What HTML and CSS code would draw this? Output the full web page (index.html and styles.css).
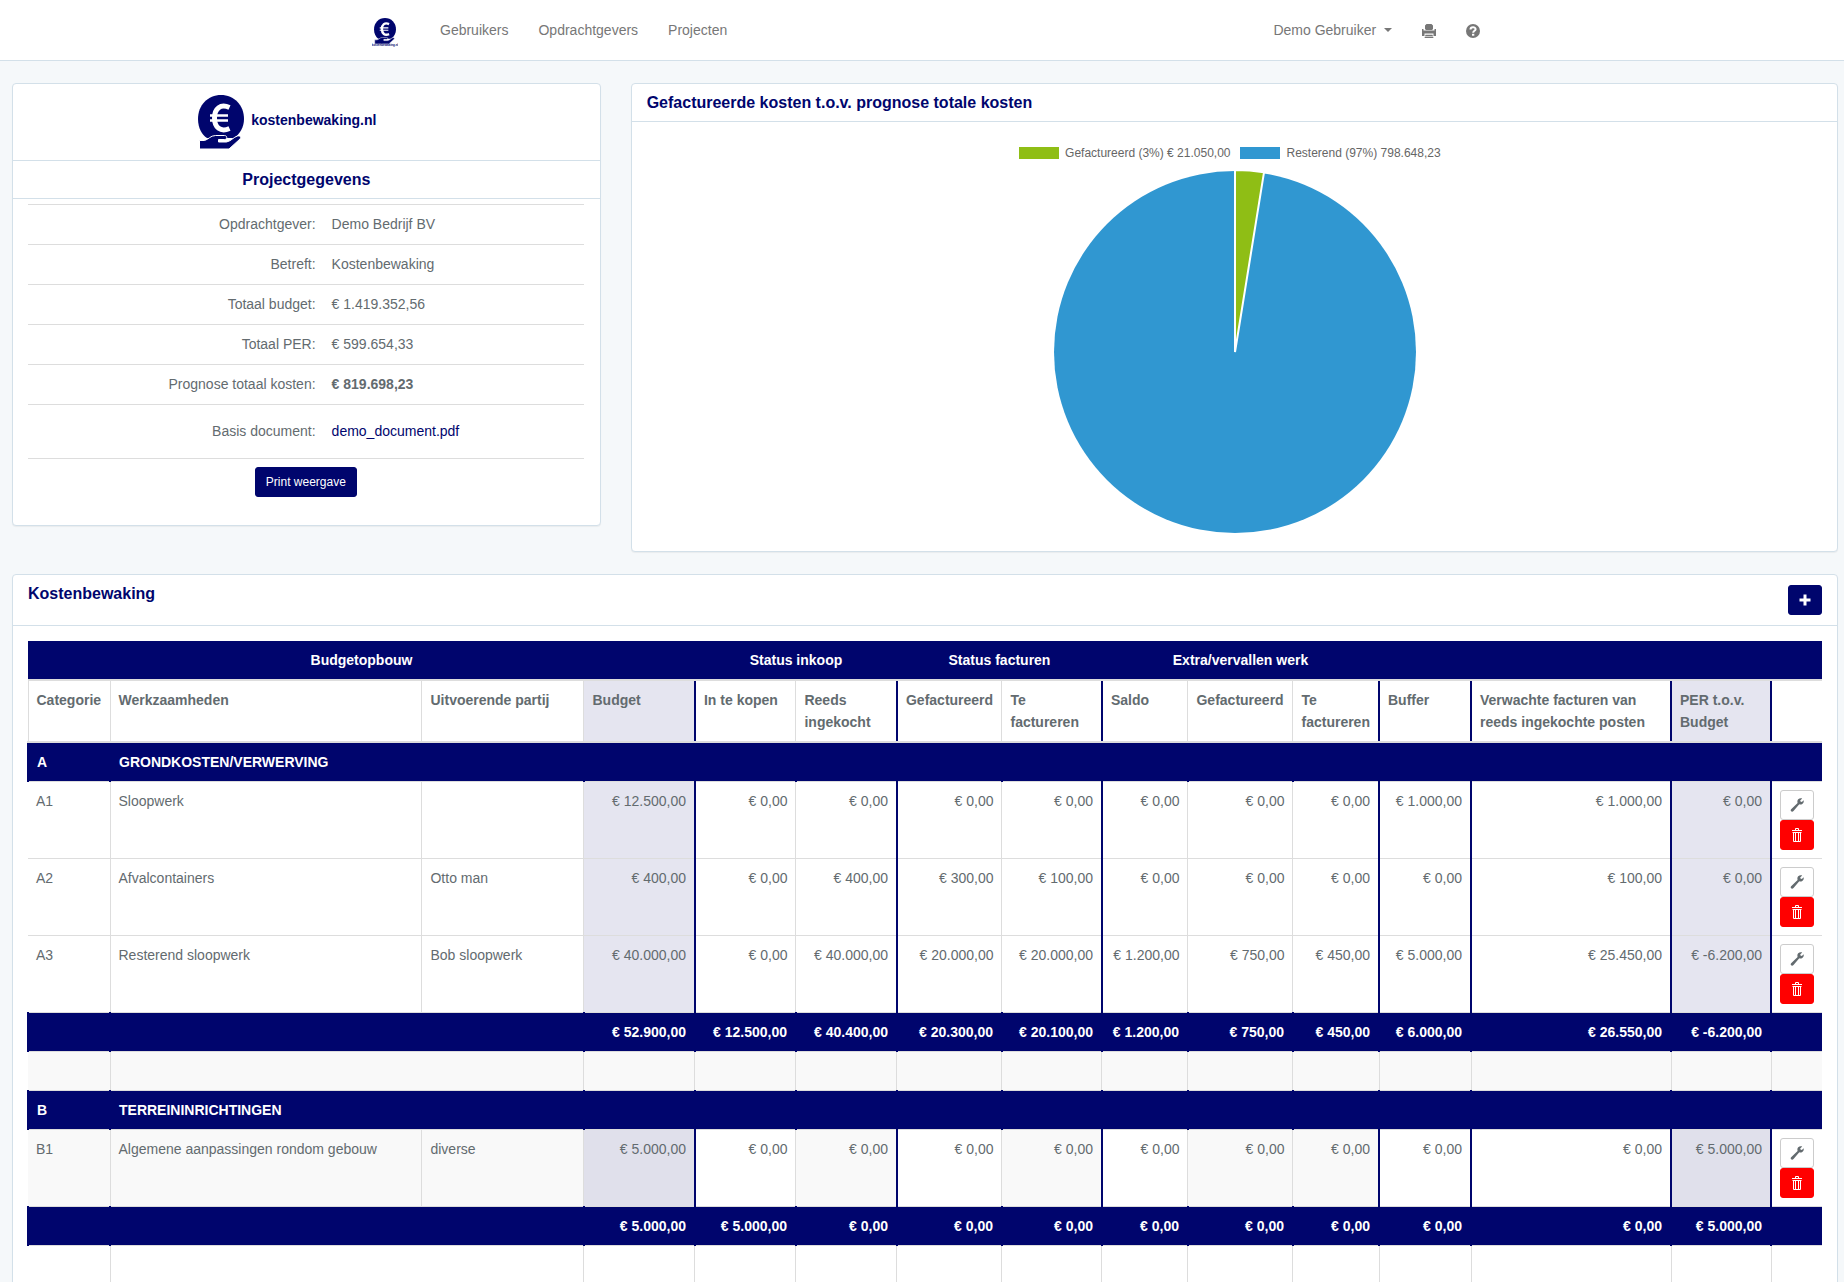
FILE: index.html
```html
<!DOCTYPE html>
<html lang="nl">
<head>
<meta charset="utf-8">
<title>Kostenbewaking</title>
<link rel="stylesheet" href="styles.css">
</head>
<body>
<svg class="sprite" aria-hidden="true">
  <symbol id="mark" viewBox="0 0 46 54">
    <path fill="#00056d" d="M23 0C10 0 0 10 0 24c0 9 4 16 9 19h27c6-4 10-11 10-19C46 10 36 0 23 0z"/>
    <path fill="none" stroke="#fff" stroke-width="5" d="M31.500 12.500c-9-4-15 1-15 10.500s6 14.500 15 10.500"/>
    <path stroke="#fff" stroke-width="2.400" d="M12 20.500H30M12 25.500H30"/>
    <path fill="#00056d" stroke="#fff" stroke-width="1" d="M1.500 45.500h5c4-1 6-5 11-5h9c3 0 3 4 0 4h-6v2.500h8c5-1 7-5 11-6 3-.500 4 1 2.500 3L31 54H1.500z"/>
  </symbol>
  <symbol id="wrench" viewBox="0 0 14 14">
    <path fill="#636b6f" d="M8.200 1.300c1.300-1.200 2.800-1.300 4-.7L10.200 2.400l.3 1.200 1.300.3 1.900-1.700c.3 1.700-.4 3.300-1.800 4-.9.400-1.800.4-2.600.1L3.500 13c-.7.900-1.800.9-2.400.3-.6-.6-.5-1.600.3-2.300L7.600 5.100c-.4-1.200-.3-2.800.6-3.800z"/>
  </symbol>
  <symbol id="trash" viewBox="0 0 14 14">
    <path fill="none" stroke="#fff" d="M5.500 2V.500h3V2M2 2.500h10M2.500 4.500h9M3.500 4.500v9h7v-9M5.500 5v8M8.500 5v8"/>
  </symbol>
</svg>

<header class="navbar">
  <div class="navbar-inner">
    <nav class="links" aria-label="Hoofdmenu">
      <a class="brand" href="#" aria-label="kostenbewaking.nl">
        <svg width="26" height="30" viewBox="0 0 26 30"><use href="#mark" x="2" y="0" width="22" height="26"/><text x="13" y="28" class="brand-text">kostenbewaking.nl</text></svg>
      </a>
      <a href="#">Gebruikers</a>
      <a href="#">Opdrachtgevers</a>
      <a href="#">Projecten</a>
    </nav>
    <nav class="links" aria-label="Account">
      <a href="#" class="user">Demo Gebruiker <span class="caret"></span></a>
      <a href="#" class="icon" aria-label="Afdrukken"><svg width="14" height="14" viewBox="0 0 14 14"><path fill="#777" d="M4.500 0h5l1.500 1.500V5l-1 1H4L3 5V1.500zM0 5h1.500v1.500h11V5H14v7h-2.500V9.500h-9V12H0zM3.500 10.700h7L11.500 14h-9z"/><path stroke="#fff" d="M3 12.500h8" stroke-width=".6"/></svg></a>
      <a href="#" class="icon" aria-label="Help"><svg width="14" height="14" viewBox="0 0 14 14"><circle cx="7" cy="7" r="7" fill="#777"/><path fill="none" stroke="#fff" stroke-width="2" d="M4.500 5.500C4.500 2.600 9.600 2.600 9.600 5.200 9.600 6.900 7.200 6.700 7.200 8.800"/><path fill="#fff" d="M6 9.800h2.300v1.900H6z"/></svg></a>
    </nav>
  </div>
</header>

<main class="page">
  <div class="top">
    <section class="panel">
      <div class="logo"><svg width="46" height="54"><use href="#mark"/></svg><span>kostenbewaking.nl</span></div>
      <div class="panel-heading centered"><h2>Projectgegevens</h2></div>
      <div class="details-body">
        <table class="details">
          <tr><th scope="row">Opdrachtgever:</th><td>Demo Bedrijf BV</td></tr>
          <tr><th scope="row">Betreft:</th><td>Kostenbewaking</td></tr>
          <tr><th scope="row">Totaal budget:</th><td>€ 1.419.352,56</td></tr>
          <tr><th scope="row">Totaal PER:</th><td>€ 599.654,33</td></tr>
          <tr><th scope="row">Prognose totaal kosten:</th><td><strong>€ 819.698,23</strong></td></tr>
          <tr class="document"><th scope="row">Basis document:</th><td><a href="#">demo_document.pdf</a></td></tr>
        </table>
        <div class="actions"><button type="button" class="btn primary">Print weergave</button></div>
      </div>
    </section>

    <section class="panel wide">
      <div class="panel-heading"><h2>Gefactureerde kosten t.o.v. prognose totale kosten</h2></div>
      <div class="chart">
        <ul class="legend">
          <li><span class="swatch green"></span>Gefactureerd (3%) € 21.050,00</li>
          <li><span class="swatch blue"></span>Resterend (97%) 798.648,23</li>
        </ul>
        <svg class="pie" width="362" height="362" viewBox="-181 -181 362 362" role="img" aria-label="Gefactureerd 3%, resterend 97%">
          <circle r="181" fill="#3097d1"/>
          <path fill="#8fbe15" stroke="#fff" stroke-width="2" d="M0 0V-182A182 182 0 0 1 29 -179.700Z"/>
        </svg>
      </div>
    </section>
  </div>

  <section class="panel">
    <div class="panel-heading with-button"><h2>Kostenbewaking</h2>
      <button type="button" class="btn primary square" aria-label="Toevoegen"><svg width="12" height="12" viewBox="0 0 12 12"><path stroke="#fff" stroke-width="3" d="M6 .500v11M.500 6h11"/></svg></button>
    </div>
    <div class="costs-body">
      <table class="costs">
        <colgroup><col class="w82"><col><col class="w162"><col class="w111"><col class="w101"><col class="w101"><col class="w105"><col class="w100"><col class="w86"><col class="w105"><col class="w86"><col class="w92"><col class="w200"><col class="w100"><col class="w51"></colgroup>
        <thead>
          <tr class="groups"><th colspan="4">Budgetopbouw</th><th colspan="2">Status inkoop</th><th colspan="2">Status facturen</th><th colspan="3">Extra/vervallen werk</th><th></th><th></th><th></th><th></th></tr>
          <tr class="heads"><th>Categorie</th><th>Werkzaamheden</th><th>Uitvoerende partij</th><th class="tint">Budget</th><th class="edge">In te kopen</th><th>Reeds ingekocht</th><th class="edge">Gefactureerd</th><th>Te factureren</th><th class="edge">Saldo</th><th>Gefactureerd</th><th>Te factureren</th><th class="edge">Buffer</th><th class="edge">Verwachte facturen van reeds ingekochte posten</th><th class="edge tint">PER t.o.v. Budget</th><th class="edge"></th></tr>
        </thead>
        <tbody>
          <tr class="band"><td>A</td><td colspan="2">GRONDKOSTEN/VERWERVING</td><td></td><td></td><td></td><td></td><td></td><td></td><td></td><td></td><td></td><td></td><td></td><td></td></tr>
          <tr class="item"><td>A1</td><td>Sloopwerk</td><td></td><td class="tint">€ 12.500,00</td><td class="edge">€ 0,00</td><td>€ 0,00</td><td class="edge">€ 0,00</td><td>€ 0,00</td><td class="edge">€ 0,00</td><td>€ 0,00</td><td>€ 0,00</td><td class="edge">€ 1.000,00</td><td class="edge">€ 1.000,00</td><td class="edge tint">€ 0,00</td><td class="edge"><button type="button" class="btn square" aria-label="Bewerken"><svg width="14" height="14"><use href="#wrench"/></svg></button><button type="button" class="btn danger square" aria-label="Verwijderen"><svg width="14" height="14"><use href="#trash"/></svg></button></td></tr>
          <tr class="item"><td>A2</td><td>Afvalcontainers</td><td>Otto man</td><td class="tint">€ 400,00</td><td class="edge">€ 0,00</td><td>€ 400,00</td><td class="edge">€ 300,00</td><td>€ 100,00</td><td class="edge">€ 0,00</td><td>€ 0,00</td><td>€ 0,00</td><td class="edge">€ 0,00</td><td class="edge">€ 100,00</td><td class="edge tint">€ 0,00</td><td class="edge"><button type="button" class="btn square" aria-label="Bewerken"><svg width="14" height="14"><use href="#wrench"/></svg></button><button type="button" class="btn danger square" aria-label="Verwijderen"><svg width="14" height="14"><use href="#trash"/></svg></button></td></tr>
          <tr class="item"><td>A3</td><td>Resterend sloopwerk</td><td>Bob sloopwerk</td><td class="tint">€ 40.000,00</td><td class="edge">€ 0,00</td><td>€ 40.000,00</td><td class="edge">€ 20.000,00</td><td>€ 20.000,00</td><td class="edge">€ 1.200,00</td><td>€ 750,00</td><td>€ 450,00</td><td class="edge">€ 5.000,00</td><td class="edge">€ 25.450,00</td><td class="edge tint">€ -6.200,00</td><td class="edge"><button type="button" class="btn square" aria-label="Bewerken"><svg width="14" height="14"><use href="#wrench"/></svg></button><button type="button" class="btn danger square" aria-label="Verwijderen"><svg width="14" height="14"><use href="#trash"/></svg></button></td></tr>
          <tr class="band total"><td></td><td colspan="2"></td><td>€ 52.900,00</td><td>€ 12.500,00</td><td>€ 40.400,00</td><td>€ 20.300,00</td><td>€ 20.100,00</td><td>€ 1.200,00</td><td>€ 750,00</td><td>€ 450,00</td><td>€ 6.000,00</td><td>€ 26.550,00</td><td>€ -6.200,00</td><td></td></tr>
          <tr class="blank striped"><td></td><td colspan="2"></td><td></td><td></td><td></td><td></td><td></td><td></td><td></td><td></td><td></td><td></td><td></td><td></td></tr>
          <tr class="band"><td>B</td><td colspan="2">TERREININRICHTINGEN</td><td></td><td></td><td></td><td></td><td></td><td></td><td></td><td></td><td></td><td></td><td></td><td></td></tr>
          <tr class="item striped"><td>B1</td><td>Algemene aanpassingen rondom gebouw</td><td>diverse</td><td class="tint">€ 5.000,00</td><td class="edge">€ 0,00</td><td>€ 0,00</td><td class="edge">€ 0,00</td><td>€ 0,00</td><td class="edge">€ 0,00</td><td>€ 0,00</td><td>€ 0,00</td><td class="edge">€ 0,00</td><td class="edge">€ 0,00</td><td class="edge tint">€ 5.000,00</td><td class="edge"><button type="button" class="btn square" aria-label="Bewerken"><svg width="14" height="14"><use href="#wrench"/></svg></button><button type="button" class="btn danger square" aria-label="Verwijderen"><svg width="14" height="14"><use href="#trash"/></svg></button></td></tr>
          <tr class="band total"><td></td><td colspan="2"></td><td>€ 5.000,00</td><td>€ 5.000,00</td><td>€ 0,00</td><td>€ 0,00</td><td>€ 0,00</td><td>€ 0,00</td><td>€ 0,00</td><td>€ 0,00</td><td>€ 0,00</td><td>€ 0,00</td><td>€ 5.000,00</td><td></td></tr>
          <tr class="blank"><td></td><td colspan="2"></td><td></td><td></td><td></td><td></td><td></td><td></td><td></td><td></td><td></td><td></td><td></td><td></td></tr>
        </tbody>
      </table>
    </div>
  </section>
</main>
</body>
</html>
```
FILE: styles.css
```css
* { box-sizing: border-box; }
body {
  margin: 0;
  background: #f5f8fa;
  color: #636b6f;
  font: 14px/22px "Liberation Sans", Arial, sans-serif;
}
a { color: #00056d; text-decoration: none; }
h2 { margin: 0; font-size: 16px; line-height: 18px; color: #00056d; }
table { width: 100%; border-collapse: collapse; }
.sprite { display: none; }

.navbar { background: #fff; border-bottom: 1px solid #d3e0e9; }
.navbar-inner {
  display: flex;
  justify-content: space-between;
  max-width: 1170px;
  height: 60px;
  margin: 0 auto;
  padding: 0 27px 0 35px;
}
.links { display: flex; align-items: center; gap: 30px; }
.links a { color: #777; }
.brand { margin-right: 12px; padding-top: 6px; }
.brand svg, .icon svg { display: block; }
.brand-text { font-size: 3px; font-weight: bold; fill: #00056d; text-anchor: middle; }
.caret {
  display: inline-block;
  margin: 0 0 2px 4px;
  vertical-align: middle;
  border: 4px solid transparent;
  border-top-color: #777;
  border-bottom: 0;
}
.icon { padding-top: 2px; }

.page { padding: 22px 6px 22px 12px; }
.top {
  display: grid;
  grid-template-columns: repeat(3, 1fr);
  gap: 30px;
  align-items: start;
  margin-bottom: 22px;
}
.panel {
  background: #fff;
  border: 1px solid #d3e0e9;
  border-radius: 4px;
  box-shadow: 0 1px 1px rgba(0, 0, 0, .05);
}
.wide { grid-column: span 2; }
.panel-heading { padding: 10px 15px; border-bottom: 1px solid #d3e0e9; }
.wide .panel-heading { padding-bottom: 9px; }
.centered { text-align: center; padding-bottom: 9px; }
.with-button { display: flex; justify-content: space-between; align-items: flex-start; }

.logo {
  display: flex;
  justify-content: center;
  align-items: center;
  gap: 7px;
  height: 77px;
  padding-right: 38px;
  border-bottom: 1px solid #d3e0e9;
  color: #00056d;
  font-weight: bold;
}
.logo span { padding-bottom: 4px; }
.details-body { padding: 5px 16px 28px 15px; }
.details th, .details td { padding: 8px 8px 9px; border-top: 1px solid #ddd; font-weight: normal; text-align: left; }
.details th { width: 53.2%; text-align: right; }
.details strong { font-weight: bold; }
.details .document th, .details .document td { padding: 15px 8px 16px; border-bottom: 1px solid #ddd; }
.actions { padding-top: 8px; text-align: center; }

.btn {
  display: inline-flex;
  align-items: center;
  justify-content: center;
  height: 30px;
  padding: 5px 10px;
  border: 1px solid #ccc;
  border-radius: 3px;
  background: #fff;
  color: #fff;
  font: 12px/18px "Liberation Sans", Arial, sans-serif;
  vertical-align: top;
}
.btn.square { width: 34px; padding: 0; }
.btn.primary { background: #00056d; border-color: #00056d; }
.btn.danger { background: #f00; border-color: #f00; }

.chart { display: flex; flex-direction: column; align-items: center; padding: 20px 14px 18px 15px; }
.legend {
  display: flex;
  gap: 10px;
  margin: 0 10px 7px 0;
  padding: 0;
  list-style: none;
  color: #666;
  font-size: 12px;
}
.legend li { display: flex; align-items: center; gap: 6px; }
.swatch { width: 40px; height: 12px; }
.green { background: #8fbe15; }
.blue { background: #3097d1; }
.pie { display: block; }

.costs-body { padding: 15px; }
.costs { table-layout: fixed; width: calc(100% + 1px); margin-left: -1px; }
.w51 { width: 51px; }
.w82 { width: 82px; }
.w86 { width: 86px; }
.w92 { width: 92px; }
.w100 { width: 100px; }
.w101 { width: 101px; }
.w105 { width: 105px; }
.w111 { width: 111px; }
.w162 { width: 162px; }
.w200 { width: 200px; }
.costs th, .costs td { padding: 8px; vertical-align: top; text-align: left; }
.costs .groups th { height: 38px; background: #00056d; color: #fff; text-align: center; }
.costs .heads th { border: 1px solid #ddd; border-width: 2px 0 2px 1px; }
.costs td { border-top: 1px solid #ddd; }
.costs td + td { border-left: 1px solid #ddd; }
.costs .item td:nth-child(n+4) { text-align: right; white-space: nowrap; }
.costs .item td:last-child { white-space: normal; }
.costs .striped td { background: #f9f9f9; }
.costs .edge, .costs .striped .edge { background: #fff; }
.costs .tint, .costs .edge.tint { background: #e5e5f0; }
.costs .striped .tint, .costs .striped .edge.tint { background: #e0e0eb; }
.costs .heads .edge, .costs .item .edge { border-left: 2px solid #00056d; }
.costs .band td {
  height: 39px;
  border-left: 2px solid #00056d;
  background: #00056d;
  color: #fff;
  font-weight: bold;
}
.costs .total td { text-align: right; }
.costs .blank td { height: 39px; }
```
